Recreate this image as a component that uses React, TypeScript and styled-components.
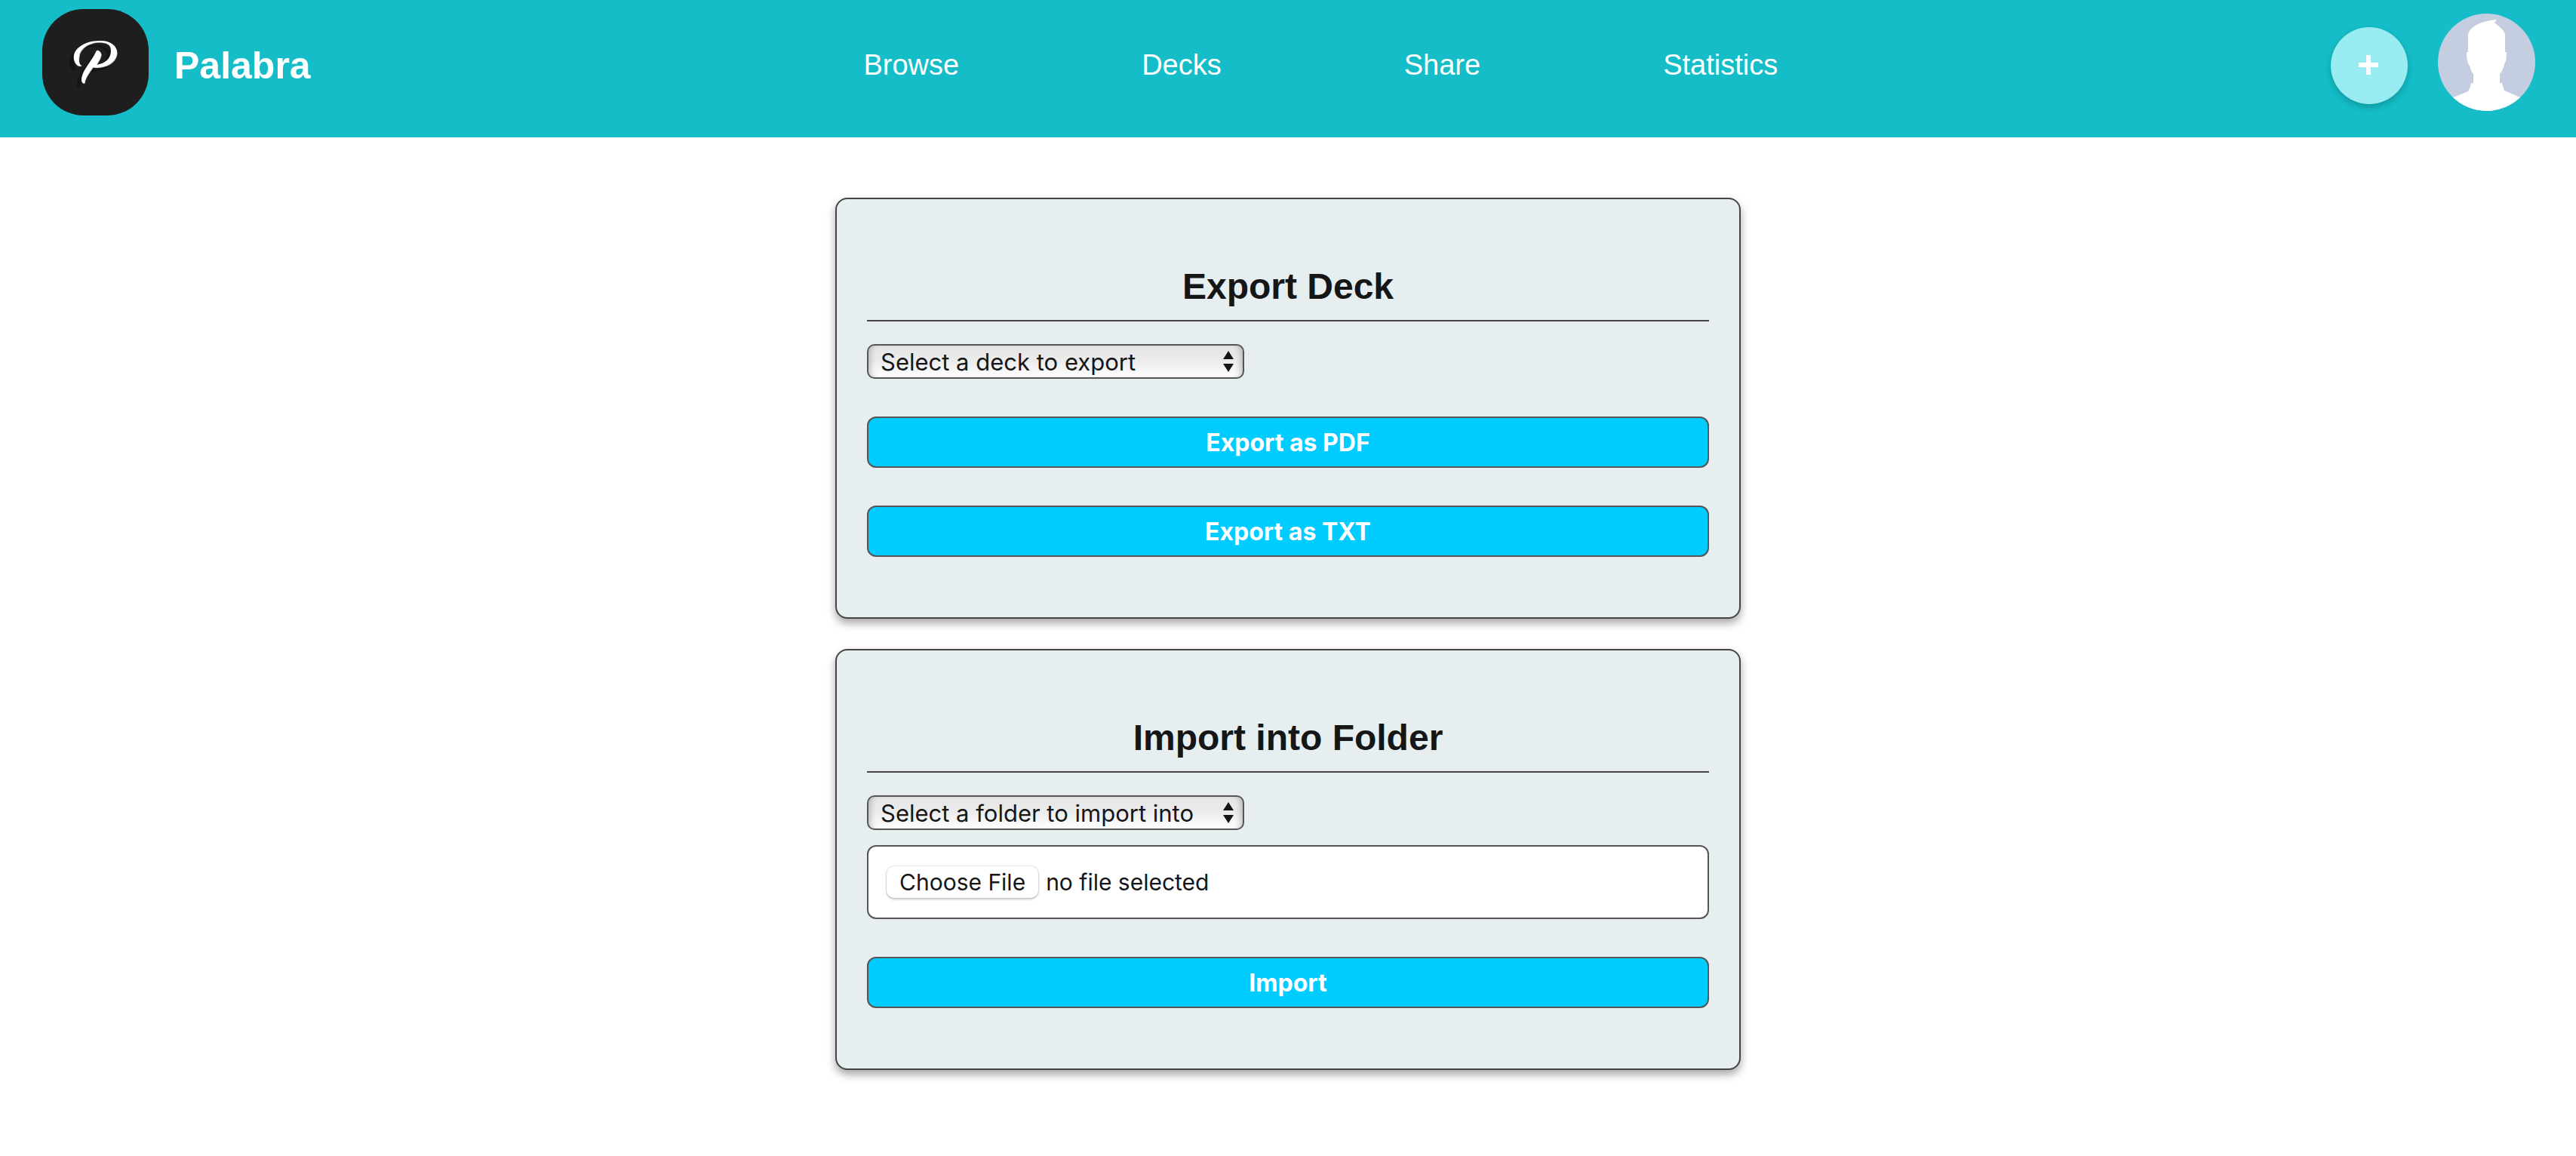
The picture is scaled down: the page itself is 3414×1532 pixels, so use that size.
import React from "react";
import styled, { createGlobalStyle } from "styled-components";

const GlobalStyle = createGlobalStyle`
  *, *::before, *::after { box-sizing: border-box; }
  body {
    margin: 0;
    background: #fff;
    color: #161616;
    font-family: "Liberation Sans", Arial, sans-serif;
  }
`;

const uiFont = `Inter, "Liberation Sans", sans-serif`;

const Header = styled.header`
  display: flex;
  align-items: center;
  justify-content: space-between;
  padding: 12px 54px 21px 56px;
  background: #14bdc7;
`;

const Brand = styled.a`
  display: flex;
  align-items: center;
  gap: 34px;
  color: #fff;
  font-size: 50px;
  font-weight: bold;
  text-decoration: none;
`;

const Logo = styled.svg`
  display: block;
  width: 141px;
  height: 141px;
  margin-bottom: 8px;
`;

const Nav = styled.nav`
  display: flex;
  gap: 242px;
`;

const NavLink = styled.a`
  color: #fff;
  font-size: 38px;
  text-decoration: none;
`;

const Actions = styled.div`
  display: flex;
  align-items: center;
  gap: 40px;
`;

const AddButton = styled.button`
  display: grid;
  place-items: center;
  width: 102px;
  height: 102px;
  padding: 0 2px 2px 0;
  border: 0;
  border-radius: 50%;
  background: #99ecf1;
  box-shadow: 0 4px 8px rgba(0, 0, 0, 0.2);
  color: #fff;
  cursor: pointer;
`;

const ProfileButton = styled.button`
  width: 129px;
  height: 129px;
  margin-bottom: 8px;
  padding: 0;
  border: 0;
  border-radius: 50%;
  overflow: hidden;
  background: #c5cde0;
  cursor: pointer;

  svg {
    display: block;
    width: 100%;
    height: 100%;
  }
`;

const Main = styled.main`
  display: flex;
  flex-direction: column;
  align-items: center;
  gap: 40px;
  padding: 80px 40px;
`;

const Card = styled.form`
  width: 100%;
  max-width: 1200px;
  padding: 88px 40px 80px;
  border: 2px solid #444;
  border-radius: 16px;
  background: #e6eef0;
  box-shadow: 0 6px 12px rgba(0, 0, 0, 0.35);
`;

const CardTitle = styled.h2`
  margin: 0 0 30px;
  padding-bottom: 16px;
  border-bottom: 2px solid #444;
  font-size: 48px;
  line-height: 56px;
  text-align: center;
`;

const SelectBox = styled.div`
  position: relative;
  width: 500px;
  max-width: 100%;
`;

const Select = styled.select`
  display: block;
  appearance: none;
  width: 100%;
  height: 46px;
  padding: 0 44px 0 16px;
  border: 2px solid #555;
  border-radius: 10px;
  background: linear-gradient(#e5e5e5, #ececec 50%, #fff);
  box-shadow: inset 8px 0 8px -6px rgba(0, 0, 0, 0.25), inset -8px 0 8px -6px rgba(0, 0, 0, 0.25);
  color: #161616;
  font: 31px ${uiFont};
`;

const SelectArrows = styled.svg`
  position: absolute;
  top: 8px;
  right: 12px;
  width: 18px;
  height: 30px;
  pointer-events: none;
`;

const FileField = styled.label`
  display: flex;
  align-items: center;
  gap: 10px;
  margin-top: 20px;
  padding: 26px 24px;
  border: 2px solid #555;
  border-radius: 12px;
  background: #fff;
  font: 30px ${uiFont};
`;

const FileInput = styled.input`
  position: absolute;
  width: 1px;
  height: 1px;
  overflow: hidden;
  clip-path: inset(50%);
`;

const FileButton = styled.span`
  padding: 0 17px;
  border-radius: 10px;
  background: #fff;
  box-shadow: 0 0 1px 1px rgba(0, 0, 0, 0.1), 0 2px 3px rgba(0, 0, 0, 0.2);
  line-height: 42px;
`;

const SubmitButton = styled.button`
  display: block;
  width: 100%;
  height: 68px;
  margin-top: 50px;
  border: 2px solid #555;
  border-radius: 12px;
  background: #0cf;
  color: #fff;
  font: bold 32px ${uiFont};
  cursor: pointer;
`;

const navItems = ["Browse", "Decks", "Share", "Statistics"];

const scriptMark =
  "M52 75C43 78 37 61 47 52C58 42 71 42 78 42C91 42 99 49 99 58C98 72 82 79 67 77C63 83 57 90 56 98C52 99 51 94 53 88C56 78 64 71 71 57C72 52 78 56 78 60C78 65 74 69 72 74C82 72 91 67 91 55C91 46 84 44 75 44C62 44 50 52 49 62C48 67 48 73 52 75Z";

function PalabraLogo() {
  return (
    <Logo viewBox="0 0 141 141" aria-hidden="true">
      <rect width="141" height="141" rx="55" fill="#1e1e1e" />
      <path d={scriptMark} fill="#141414" transform="translate(-6 6)" />
      <path d={scriptMark} fill="#c4c4c4" transform="translate(0.6 0.8)" />
      <path d={scriptMark} fill="#fff" />
    </Logo>
  );
}

function PlusIcon() {
  return (
    <svg width="26" height="26" viewBox="0 0 26 26" aria-hidden="true">
      <path d="M10 0H16V10H26V16H16V26H10V16H0V10H10Z" fill="#fff" />
    </svg>
  );
}

function ProfilePicture() {
  return (
    <svg viewBox="0 0 129 129" aria-hidden="true">
      <path
        d="M78 8C62 9 40 16 40 30V51H38C38 62 40 67 42 69C43 74 45 78 47 80V92H44C43 96 42 100 40 103C34 106 27 108 20 111V129H109V111C102 108 95 105 88 102C87 99 86 96 85 92H82V80C85 77 87 72 88 67C90 64 91 60 91 51H89V28C88 21 79 16 75 12Z"
        fill="#fff"
      />
    </svg>
  );
}

function DropDown({ label, placeholder }: { label: string; placeholder: string }) {
  return (
    <SelectBox>
      <Select aria-label={label} defaultValue="">
        <option value="">{placeholder}</option>
      </Select>
      <SelectArrows viewBox="0 0 18 30" aria-hidden="true">
        <path d="M2 12L9 1L16 12ZM2 18H16L9 29Z" fill="#161616" />
      </SelectArrows>
    </SelectBox>
  );
}

export default function App() {
  return (
    <>
      <GlobalStyle />
      <Header>
        <Brand href="#">
          <PalabraLogo />
          Palabra
        </Brand>
        <Nav>
          {navItems.map((item) => (
            <NavLink key={item} href={`#${item.toLowerCase()}`}>
              {item}
            </NavLink>
          ))}
        </Nav>
        <Actions>
          <AddButton type="button" aria-label="Add">
            <PlusIcon />
          </AddButton>
          <ProfileButton type="button" aria-label="Profile">
            <ProfilePicture />
          </ProfileButton>
        </Actions>
      </Header>
      <Main>
        <Card>
          <CardTitle>Export Deck</CardTitle>
          <DropDown label="Deck" placeholder="Select a deck to export" />
          <SubmitButton type="button">Export as PDF</SubmitButton>
          <SubmitButton type="button">Export as TXT</SubmitButton>
        </Card>
        <Card>
          <CardTitle>Import into Folder</CardTitle>
          <DropDown label="Folder" placeholder="Select a folder to import into" />
          <FileField>
            <FileInput type="file" />
            <FileButton>Choose File</FileButton>
            no file selected
          </FileField>
          <SubmitButton type="button">Import</SubmitButton>
        </Card>
      </Main>
    </>
  );
}
